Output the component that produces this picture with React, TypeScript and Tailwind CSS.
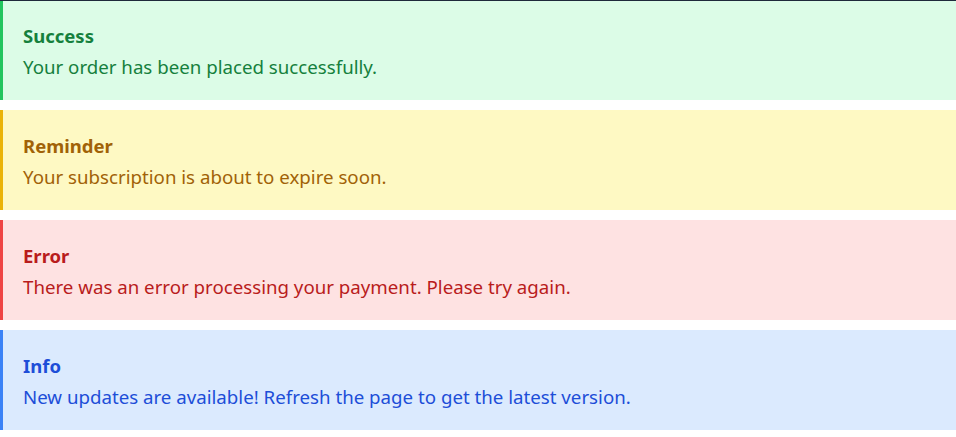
const ALERTS = [
  {
    title: "Success",
    body: "Your order has been placed successfully.",
    box: "bg-[#dcfce7] border-[#22c55e] text-[#15803d]",
  },
  {
    title: "Reminder",
    body: "Your subscription is about to expire soon.",
    box: "bg-[#fef9c3] border-[#eab308] text-[#a16207]",
  },
  {
    title: "Error",
    body: "There was an error processing your payment. Please try again.",
    box: "bg-[#fee2e2] border-[#ef4444] text-[#b91c1c]",
  },
  {
    title: "Info",
    body: "New updates are available! Refresh the page to get the latest version.",
    box: "bg-[#dbeafe] border-[#3b82f6] text-[#1d4ed8]",
  },
];

export default function App() {
  return (
    <div
      className="relative flex min-h-[437px] flex-col gap-2.5 bg-white"
      style={{ fontFamily: '"Noto Sans", "Open Sans", sans-serif' }}
    >
      {/* thin dark strip across the top edge */}
      <div className="absolute inset-x-0 top-0 h-px bg-[#1e293b]" />
      {ALERTS.map((a) => (
        <div key={a.title} className={`h-[100px] border-l-[3px] px-5 pt-[22px] ${a.box}`}>
          <p className="text-[18.5px] font-bold leading-7">{a.title}</p>
          <p className="mt-[3px] text-[18.7px] leading-7">{a.body}</p>
        </div>
      ))}
    </div>
  );
}
